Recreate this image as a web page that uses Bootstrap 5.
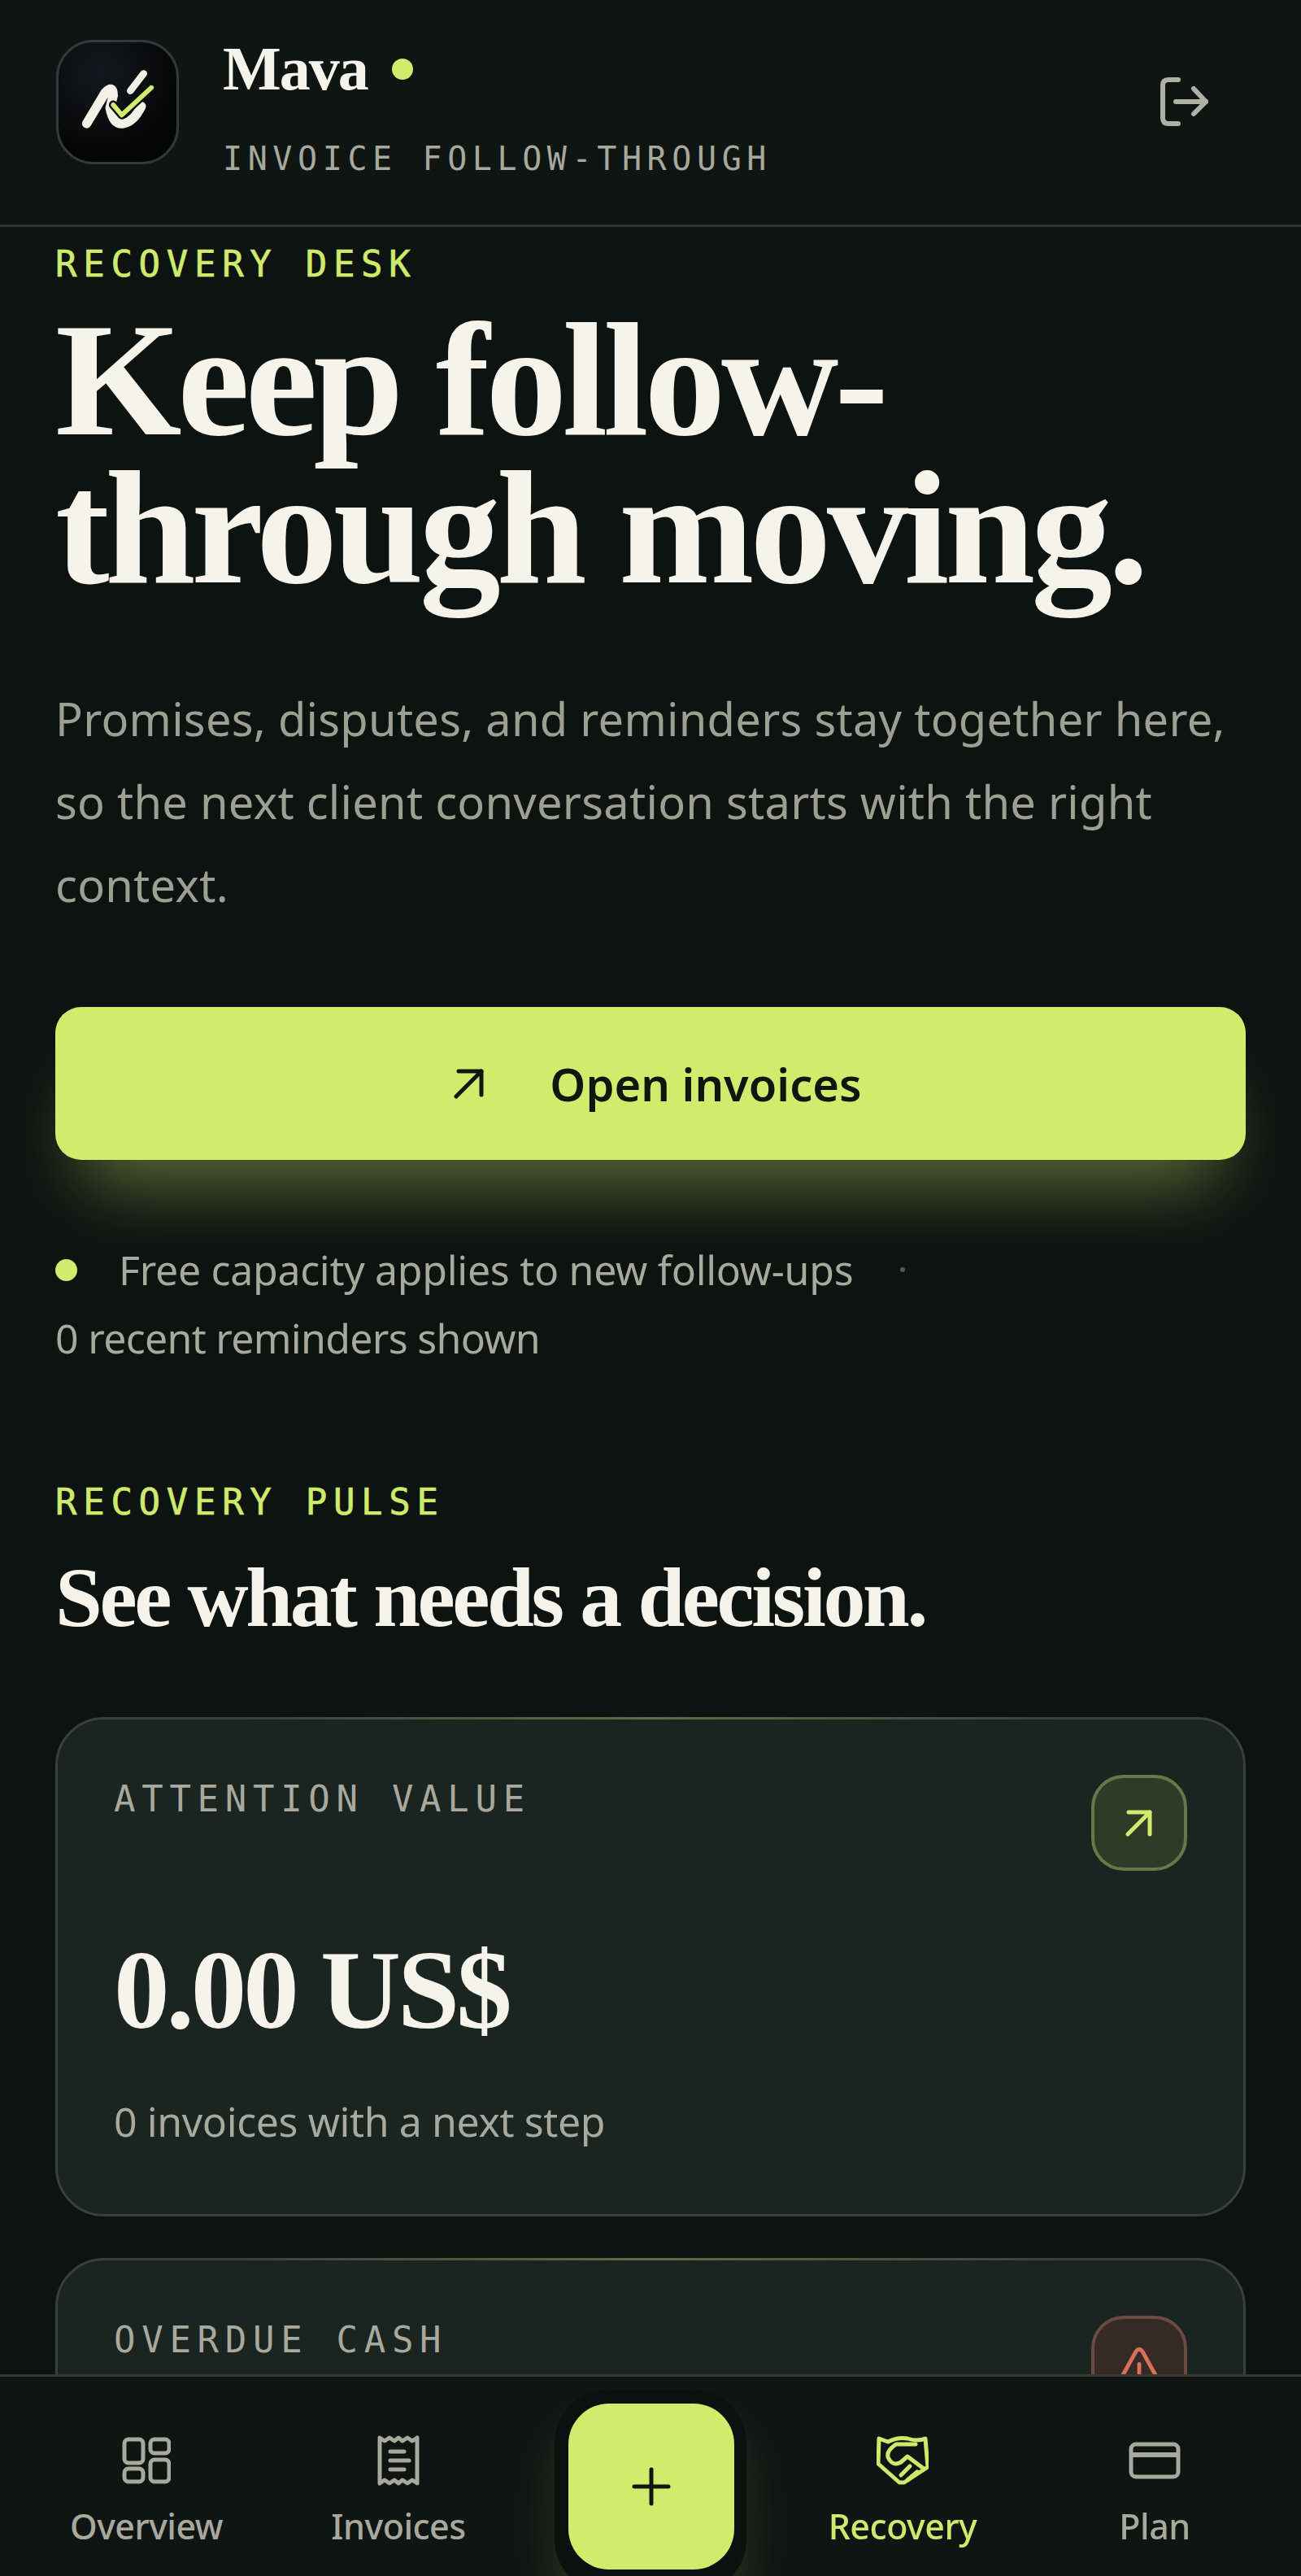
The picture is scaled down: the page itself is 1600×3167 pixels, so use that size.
<!DOCTYPE html>
<html lang="en">
<head>
    <meta charset="UTF-8">
    <meta name="viewport" content="width=device-width, initial-scale=1.0">
    <title>Mava</title>
    <link href="https://cdn.jsdelivr.net/npm/bootstrap@5.3.2/dist/css/bootstrap.min.css" rel="stylesheet">
    <style>
        html, body { height: 3167px; overflow: hidden; }
        body {
            background: #0d1311;
            color: #a8a89c;
            font-family: "Noto Sans", sans-serif;
        }
        .top-bar {
            height: 279px;
            padding: 49px 113px 0 69px;
            background: #0e1513;
            border-bottom: 3px solid #2f342e;
        }
        .logo-box {
            width: 151px;
            height: 153px;
            border: 3px solid #34383a;
            border-radius: 46px;
            background: radial-gradient(circle at 35% 25%, #14181e, #040506 70%);
            flex: none;
        }
        .brand-block { margin-left: 54px; }
        .brand-name {
            font-family: "Liberation Serif", serif;
            font-weight: 700;
            font-size: 76px;
            line-height: 62px;
            letter-spacing: -2px;
            color: #f5f3ea;
            margin-top: 4px;
        }
        .live-dot { width: 26px; height: 26px; border-radius: 50%; background: #d1ec6d; margin-left: 30px; margin-top: 6px; }
        .brand-sub {
            font-family: "DejaVu Sans Mono", monospace;
            font-size: 40px;
            line-height: 44px;
            letter-spacing: 6.6px;
            margin-top: 58px;
        }
        .logout-icon { margin-top: 46px; }
        .eyebrow {
            font-family: "DejaVu Sans Mono", monospace;
            font-size: 44px;
            line-height: 50px;
            letter-spacing: 7.7px;
            color: #cfe96c;
            -webkit-text-stroke: .7px #cfe96c;
        }
        .page-main { padding: 21px 68px 0; height: 2888px; overflow: hidden; }
        .hero-title {
            font-family: "Liberation Serif", serif;
            font-weight: 700;
            font-size: 200px;
            line-height: 182px;
            letter-spacing: -5.3px;
            color: #f5f3ea;
            margin: 26px 0 0;
        }
        .hero-copy {
            font-size: 56px;
            line-height: 102px;
            letter-spacing: .25px;
            color: #9e9e93;
            margin: 92px 0 0;
        }
        .open-btn {
            height: 188px;
            margin-top: 100px;
            padding-left: 30px;
            border: 0;
            border-radius: 32px;
            background: #d1ec6d;
            color: #10160f;
            font-size: 56px;
            font-weight: 600;
            gap: 80px;
            box-shadow: 0 62px 90px -34px rgba(209, 236, 109, .42);
        }
        .status-text { font-size: 50px; line-height: 84px; letter-spacing: -.3px; color: #a8a89c; }
        .status-dot { width: 27px; height: 27px; border-radius: 50%; background: #d1ec6d; margin-right: 51px; }
        .status-sep { width: 6px; height: 6px; border-radius: 50%; background: #555a52; margin-left: 58px; }
        .status-block { margin-top: 93px; }
        .reminder-line { letter-spacing: -.7px; }
        .pulse-eyebrow { margin-top: 135px; }
        .section-title {
            font-family: "Liberation Serif", serif;
            font-weight: 700;
            font-size: 104px;
            line-height: 120px;
            letter-spacing: -3.4px;
            color: #f5f3ea;
            margin: 32px 0 0;
        }
        .pulse-card {
            position: relative;
            height: 614px;
            padding: 73px 69px 0;
            background: #1a2421;
            border: 3px solid #3a3f38;
            border-radius: 60px;
            margin-bottom: 51px;
        }
        .pulse-card.first { margin-top: 87px; }
        .pulse-card::before {
            content: "";
            position: absolute;
            top: -3px;
            left: 15%;
            right: 15%;
            height: 3px;
            background: linear-gradient(90deg, transparent, #616c48, transparent);
        }
        .pulse-label {
            font-family: "DejaVu Sans Mono", monospace;
            font-size: 44px;
            line-height: 50px;
            letter-spacing: 7.7px;
            color: #a8a89c;
        }
        .tone-box {
            width: 118px;
            height: 118px;
            border-radius: 40px;
            border: 4px solid #67774a;
            background: #2f3a27;
            margin-top: -5px;
        }
        .tone-box.alert { border-color: #6b4a42; background: #352a25; }
        .alert-icon { margin-top: 26px; }
        .pulse-value {
            font-family: "Liberation Serif", serif;
            font-weight: 700;
            font-size: 137px;
            line-height: 130px;
            letter-spacing: -4px;
            color: #f5f3ea;
            margin-top: 82px;
        }
        .pulse-note { font-size: 50px; line-height: 60px; letter-spacing: -.4px; margin-top: 66px; }
        .tab-bar {
            position: fixed;
            left: 0;
            right: 0;
            bottom: 0;
            height: 248px;
            padding: 0 25px;
            background: #0f1513;
            border-top: 3px solid #35392f;
            display: grid;
            grid-template-columns: repeat(5, 1fr);
        }
        .tab-item {
            position: relative;
            text-align: center;
            font-size: 43px;
            font-weight: 500;
            line-height: 50px;
            letter-spacing: -.5px;
            color: #a8a89c;
            text-decoration: none;
        }
        .tab-item.active { color: #cfe96c; }
        .tab-icon { height: 134px; padding-top: 72px; margin-bottom: 25px; display: flex; justify-content: center; align-items: center; }
        .fab-ring {
            position: absolute;
            top: 16px;
            left: 50%;
            transform: translateX(-50%);
            width: 236px;
            height: 250px;
            padding: 17px;
            background: #0c100e;
            border-radius: 66px;
            box-shadow: 0 40px 60px rgba(209, 236, 109, .14);
        }
        .fab-btn {
            width: 204px;
            height: 204px;
            border-radius: 50px;
            background: #d1ec6d;
            border: 0;
        }
    </style>
</head>
<body>
    <header class="top-bar d-flex align-items-start">
        <div class="logo-box d-flex align-items-center justify-content-center">
            <svg width="151" height="153" viewBox="0 0 151 153" fill="none" stroke-linecap="round" stroke-linejoin="round">
                <path d="M36 104 L60 64 Q70 54 70 68 L66 84 Q70 106 83 104 Q96 102 106 82" stroke="#f3f1e6" stroke-width="12"/>
                <path d="M92 62 L109 40" stroke="#f3f1e6" stroke-width="9"/>
                <path d="M70 80 L81 93 L119 58" stroke="#0a0c0e" stroke-width="11"/>
                <path d="M70 80 L81 93 L119 58" stroke="#d1ec6d" stroke-width="6"/>
            </svg>
        </div>
        <div class="brand-block">
            <div class="d-flex align-items-center">
                <span class="brand-name">Mava</span>
                <span class="live-dot"></span>
            </div>
            <div class="brand-sub">INVOICE FOLLOW-THROUGH</div>
        </div>
        <svg class="logout-icon ms-auto" width="60" height="60" viewBox="0 0 60 60" fill="none" stroke="#b1b0a5" stroke-width="6" stroke-linecap="round" stroke-linejoin="round">
            <path d="M22 3 H10 Q3 3 3 10 V50 Q3 57 10 57 H22"/>
            <path d="M19 30 H56"/>
            <path d="M41 14 L56 30 L41 45"/>
        </svg>
    </header>

    <main class="page-main">
        <div class="eyebrow">RECOVERY DESK</div>
        <h1 class="hero-title">Keep follow-<br>through moving.</h1>
        <p class="hero-copy">Promises, disputes, and reminders stay together here, so the next client conversation starts with the right context.</p>

        <button type="button" class="btn open-btn w-100 d-flex align-items-center justify-content-center">
            <svg width="38" height="38" viewBox="0 0 38 38" fill="none" stroke="#10160f" stroke-width="5" stroke-linecap="round" stroke-linejoin="round">
                <path d="M3 35 L34 4"/><path d="M6 4 H34 V33"/>
            </svg>
            <span>Open invoices</span>
        </button>

        <div class="status-block status-text">
            <div class="d-flex align-items-center">
                <span class="status-dot"></span>
                <span>Free capacity applies to new follow-ups</span>
                <span class="status-sep"></span>
            </div>
            <div class="reminder-line">0 recent reminders shown</div>
        </div>

        <div class="eyebrow pulse-eyebrow">RECOVERY PULSE</div>
        <h2 class="section-title mb-0">See what needs a decision.</h2>

        <div class="pulse-card first">
            <div class="d-flex justify-content-between align-items-start">
                <span class="pulse-label">ATTENTION VALUE</span>
                <span class="tone-box d-flex align-items-center justify-content-center">
                    <svg width="34" height="34" viewBox="0 0 34 34" fill="none" stroke="#d1ec6d" stroke-width="5" stroke-linecap="round" stroke-linejoin="round">
                        <path d="M3 31 L30 4"/><path d="M4 4 H30 V31"/>
                    </svg>
                </span>
            </div>
            <div class="pulse-value">0.00 US$</div>
            <div class="pulse-note">0 invoices with a next step</div>
        </div>

        <div class="pulse-card">
            <div class="d-flex justify-content-between align-items-start">
                <span class="pulse-label">OVERDUE CASH</span>
                <span class="tone-box alert d-flex align-items-center justify-content-center">
                    <svg class="alert-icon" width="80" height="70" viewBox="0 0 80 70" fill="none" stroke="#d9705a" stroke-width="5" stroke-linecap="round" stroke-linejoin="round">
                        <path d="M36 6 Q40 1 44 6 L76 64 Q78 68 74 68 H6 Q2 68 4 64 Z"/><path d="M40 22 V34"/>
                    </svg>
                </span>
            </div>
        </div>
    </main>

    <nav class="tab-bar">
        <a class="tab-item" href="#">
            <div class="tab-icon">
                <svg width="60" height="58" viewBox="0 0 60 58" fill="none" stroke="#a8a89c" stroke-width="5">
                    <rect x="3" y="3" width="23" height="29" rx="5"/>
                    <rect x="35" y="3" width="23" height="17" rx="5"/>
                    <rect x="3" y="39" width="23" height="16" rx="5"/>
                    <rect x="35" y="28" width="23" height="27" rx="5"/>
                </svg>
            </div>
            Overview
        </a>
        <a class="tab-item" href="#">
            <div class="tab-icon">
                <svg width="52" height="62" viewBox="0 0 52 62" fill="none" stroke="#a8a89c" stroke-width="5" stroke-linecap="round" stroke-linejoin="round">
                    <path d="M3 3 L9 7 L15 3 L21 7 L26 3 L31 7 L37 3 L43 7 L49 3 V59 L43 55 L37 59 L31 55 L26 59 L21 55 L15 59 L9 55 L3 59 Z"/>
                    <path d="M16 20 H33"/><path d="M16 31 H39"/><path d="M16 42 H33"/>
                </svg>
            </div>
            Invoices
        </a>
        <div class="tab-item">
            <div class="fab-ring">
                <button type="button" class="fab-btn d-flex align-items-center justify-content-center" aria-label="Add">
                    <svg width="48" height="48" viewBox="0 0 48 48" fill="none" stroke="#10160f" stroke-width="5" stroke-linecap="round">
                        <path d="M24 3 V45"/><path d="M3 24 H45"/>
                    </svg>
                </button>
            </div>
        </div>
        <a class="tab-item active" href="#">
            <div class="tab-icon">
                <svg width="64" height="60" viewBox="0 0 64 60" fill="none" stroke="#cfe96c" stroke-width="5" stroke-linecap="round" stroke-linejoin="round">
                    <path d="M3 3 L14 7 Q26 1 38 3 Q50 7 60 3 L63 38 L34 57 L28 57 L2 34 Z"/>
                    <path d="M48 10 H24 Q12 18 14 26 Q20 38 30 32 L38 25 L58 40"/>
                    <path d="M41 37 L30 48"/><path d="M50 44 L38 54"/>
                </svg>
            </div>
            Recovery
        </a>
        <a class="tab-item" href="#">
            <div class="tab-icon">
                <svg width="64" height="46" viewBox="0 0 64 46" fill="none" stroke="#a8a89c" stroke-width="5">
                    <rect x="3" y="3" width="58" height="40" rx="6"/>
                    <path d="M3 16 H61" stroke-width="6"/>
                </svg>
            </div>
            Plan
        </a>
    </nav>

    <script src="https://cdn.jsdelivr.net/npm/bootstrap@5.3.2/dist/js/bootstrap.bundle.min.js"></script>
</body>
</html>
